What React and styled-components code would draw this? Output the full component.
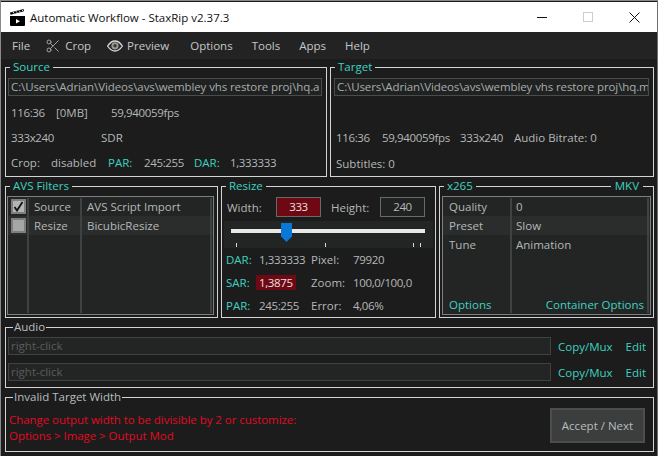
import React from "react";
import styled, { createGlobalStyle } from "styled-components";
import { Scissors } from "lucide-react";

const teal = "#3fd2c0";
const text = "#b4b8b8";

const GlobalStyle = createGlobalStyle`
  html, body {
    margin: 0;
    padding: 0;
    background: #1c1c1c;
  }
  * {
    box-sizing: border-box;
  }
`;

const Window = styled.div`
  width: 658px;
  height: 456px;
  display: flex;
  flex-direction: column;
  background: #1c1c1c;
  border-top: 1px solid #8a8a8a;
  border-left: 1px solid #8a8a8a;
  border-right: 1px solid #6e6e6e;
  overflow: hidden;
  font-family: "Open Sans", "Noto Sans", sans-serif;
  font-size: 11.5px;
  color: ${text};
`;

const TitleBar = styled.div`
  height: 30px;
  flex: none;
  display: flex;
  align-items: center;
  background: #fff;
  color: #111;
  margin-top: 1px;
  padding-left: 9px;
  font-size: 11.5px;
`;

const TitleText = styled.span`
  margin-left: 5px;
  flex: 1;
`;

const CaptionButton = styled.div`
  width: 46px;
  display: flex;
  justify-content: center;
`;

const MenuBar = styled.div`
  height: 27px;
  flex: none;
  display: flex;
  align-items: center;
  background: #232323;
  color: #c4c8c8;
  font-size: 11.5px;
  padding-left: 11px;
`;

const MenuItem = styled.div`
  display: flex;
  align-items: center;
  gap: 4px;
  margin-left: ${(p) => p.$gap || 0}px;
  svg {
    color: #a8a8a8;
  }
`;

const Content = styled.div`
  flex: 1;
  display: flex;
  flex-direction: column;
  gap: 2px;
  padding: 1px 3px 0 4px;
`;

const Row = styled.div`
  display: grid;
  grid-template-columns: ${(p) => p.$cols};
  gap: 3px;
`;

const Group = styled.fieldset`
  position: relative;
  margin: 0;
  padding: 0 2px;
  min-width: 0;
  height: ${(p) => p.$h}px;
  border: 1px solid #d4d4d4;
  display: flex;
  flex-direction: column;
`;

const Legend = styled.legend`
  height: 14px;
  line-height: 14px;
  padding: 0 ${(p) => (p.$plain ? 1 : 3)}px;
  margin-left: ${(p) => (p.$plain ? 5 : 2)}px;
  font-size: 11.5px;
  color: ${(p) => (p.$plain ? "#b8bcbc" : teal)};
`;

const LegendRight = styled.span`
  position: absolute;
  top: -14px;
  right: 10px;
  z-index: 1;
  height: 14px;
  line-height: 14px;
  padding: 0 4px;
  font-size: 11.5px;
  color: ${teal};
  background: #1c1c1c;
`;

const PathBox = styled.div`
  height: 18px;
  flex: none;
  margin: 4px 2px 0 ${(p) => p.$inset || 0}px;
  padding: 0 2px;
  line-height: 16px;
  border: 1px solid #4a4c4c;
  background: #202222;
  white-space: nowrap;
  overflow: hidden;
  letter-spacing: -0.1px;
  color: #a8acac;
`;

const InfoRow = styled.div`
  display: flex;
  flex: none;
  align-items: center;
  height: ${(p) => p.$h || 25}px;
  padding-left: ${(p) => p.$pad ?? 3}px;
  padding-top: ${(p) => p.$top || 0}px;
  white-space: nowrap;
`;

const Cell = styled.span`
  flex: none;
  width: ${(p) => (p.$w ? `${p.$w}px` : "auto")};
  color: ${(p) => (p.$accent ? teal : "inherit")};
  letter-spacing: ${(p) => (p.$num ? "-0.35px" : "normal")};
`;

const ListPanel = styled.div`
  position: relative;
  flex: 1;
  margin: 3px ${(p) => p.$r || 0}px 2px ${(p) => p.$l || 0}px;
  border: 1px solid #7c8082;
  background: #232525;
  display: flex;
  flex-direction: column;
  overflow: hidden;
`;

const ListRow = styled.div`
  height: 19px;
  flex: none;
  display: flex;
  align-items: center;
  background: ${(p) => (p.$alt ? "#2b2d2d" : "transparent")};
`;

const Check = styled.div`
  width: 15px;
  height: 15px;
  margin-left: 3px;
  flex: none;
  background: ${(p) => (p.$on ? "#b4b4b4" : "#a6a6a6")};
  border: 2px solid #7e7e7e;
  display: flex;
  align-items: center;
  justify-content: center;
  color: #111;
`;

const NameCol = styled.span`
  flex: none;
  width: ${(p) => p.$w}px;
  padding-left: ${(p) => p.$pad}px;
`;

const Splitter = styled.div`
  position: absolute;
  top: 1px;
  bottom: 1px;
  left: ${(p) => p.$x}px;
  width: 2px;
  background: #3e4242;
`;

const ListFooter = styled.div`
  margin-top: auto;
  height: 20px;
  display: flex;
  align-items: center;
  justify-content: space-between;
  padding: 0 6px;
  color: ${teal};
`;

const SizeRow = styled.div`
  display: flex;
  flex: none;
  align-items: center;
  height: 20px;
  margin-top: 4px;
  padding-left: 3px;
`;

const SizeLabel = styled.span`
  flex: none;
  width: ${(p) => p.$w}px;
`;

const SizeInput = styled.div`
  width: 45px;
  height: 20px;
  flex: none;
  border: 1px solid #666a6a;
  background: ${(p) => (p.$bad ? "#6e0812" : "#202222")};
  color: ${(p) => (p.$bad ? "#e8e0e0" : text)};
  text-align: center;
  line-height: 17px;
  letter-spacing: -0.35px;
`;

const SliderBand = styled.div`
  position: relative;
  height: 27px;
  flex: none;
  margin-top: 4px;
  background: #232525;
`;

const SliderTrack = styled.div`
  position: absolute;
  left: 7px;
  right: 8px;
  top: 8px;
  height: 4px;
  background: #e8e8e6;
`;

const SliderThumb = styled.div`
  position: absolute;
  left: 57px;
  top: 2px;
  width: 11px;
  height: 19px;
  background: #0a78d6;
  clip-path: polygon(0 0, 100% 0, 100% 70%, 50% 100%, 0 70%);
`;

const Tick = styled.div`
  position: absolute;
  top: 22px;
  left: ${(p) => p.$x}px;
  width: 1px;
  height: 4px;
  background: #d8d8d8;
`;

const ResizeInfo = styled.div`
  display: flex;
  flex-direction: column;
`;

const BadValue = styled.span`
  display: inline-block;
  width: 40px;
  height: 15px;
  line-height: 15px;
  margin-left: -3px;
  padding-left: 3px;
  background: #6e0812;
  color: #e8e0e0;
`;

const AudioRow = styled.div`
  display: flex;
  flex: none;
  align-items: center;
  height: 18px;
  margin-bottom: 8px;
  &:first-of-type {
    margin-top: 3px;
  }
`;

const AudioInput = styled.div`
  width: 543px;
  height: 18px;
  flex: none;
  padding: 0 2px;
  line-height: 16px;
  border: 1px solid #404242;
  background: #232525;
  color: #5a5c5c;
`;

const LinkText = styled.span`
  flex: none;
  color: ${teal};
  margin-left: ${(p) => p.$gap}px;
`;

const AlertBody = styled.div`
  flex: 1;
  display: flex;
  align-items: center;
  justify-content: space-between;
  padding: 0 6px 5px 1px;
`;

const AlertText = styled.div`
  color: #e00a24;
  line-height: 16px;
  margin-top: 8px;
  letter-spacing: -0.05px;
`;

const AcceptButton = styled.button`
  width: 95px;
  height: 35px;
  margin-top: 3px;
  border: 2px solid #4c4e4e;
  background: #3c3e3e;
  color: #b8bcbc;
  font: inherit;
  padding: 0;
`;

const ClapperIcon = () => (
  <svg width="15" height="17" viewBox="0 0 15 17">
    <path d="M0 7h15v9a1 1 0 0 1-1 1H1a1 1 0 0 1-1-1z" fill="#000" />
    <path d="M0 3.5 13.5 0l.6 2.2L.6 5.7z" fill="#000" />
    <path d="M3 3l1.2 1.6M6 2.2l1.2 1.6M9 1.4l1.2 1.6M12 .7l1.2 1.6" stroke="#fff" strokeWidth="0.9" />
    <path d="M6 10l4 2.2L6 14.4z" fill="#fff" />
  </svg>
);

const EyeIcon = () => (
  <svg width="16" height="12" viewBox="0 0 16 12">
    <path d="M.6 6C3 2.400 5.300 1 8 1s5 1.400 7.400 5C13 9.600 10.700 11 8 11S3 9.600.6 6z" fill="#2a2a2a" stroke="#d8d8d8" strokeWidth="1.300" />
    <circle cx="8" cy="5.800" r="3.600" fill="#9a9a9a" />
    <circle cx="8" cy="5.800" r="1.700" fill="#3a3a3a" />
  </svg>
);

const CheckMark = () => (
  <svg width="11" height="11" viewBox="0 0 11 11">
    <path d="M1.500 6 4 9.500 9.500 1" fill="none" stroke="currentColor" strokeWidth="1.800" />
  </svg>
);

export default function App() {
  return (
    <>
      <GlobalStyle />
      <Window>
        <TitleBar>
          <ClapperIcon />
          <TitleText>Automatic Workflow - StaxRip v2.37.3</TitleText>
          <CaptionButton>
            <svg width="10" height="10" viewBox="0 0 10 10">
              <path d="M0 5.500h10" stroke="#111" />
            </svg>
          </CaptionButton>
          <CaptionButton>
            <svg width="10" height="10" viewBox="0 0 10 10">
              <rect x="0.500" y="0.500" width="9" height="9" fill="none" stroke="#ccc" />
            </svg>
          </CaptionButton>
          <CaptionButton>
            <svg width="11" height="11" viewBox="0 0 11 11">
              <path d="M.5.500l10 10M10.500.500l-10 10" stroke="#111" />
            </svg>
          </CaptionButton>
        </TitleBar>
        <MenuBar>
          <MenuItem>File</MenuItem>
          <MenuItem $gap={15}>
            <Scissors size={16} strokeWidth={1.4} />
            Crop
          </MenuItem>
          <MenuItem $gap={16}>
            <EyeIcon />
            Preview
          </MenuItem>
          <MenuItem $gap={21}>Options</MenuItem>
          <MenuItem $gap={19}>Tools</MenuItem>
          <MenuItem $gap={19}>Apps</MenuItem>
          <MenuItem $gap={19}>Help</MenuItem>
        </MenuBar>
        <Content>
          <Row $cols="322px 324px">
            <Group $h={117}>
              <Legend>Source</Legend>
              <PathBox>C:\Users\Adrian\Videos\avs\wembley vhs restore proj\hq.a</PathBox>
              <InfoRow $h={31} $top={2}>
                <Cell $w={45} $num>116:36</Cell>
                <Cell $w={55}>[0MB]</Cell>
                <Cell $num>59,940059fps</Cell>
              </InfoRow>
              <InfoRow $h={20}>
                <Cell $w={90} $num>333x240</Cell>
                <Cell>SDR</Cell>
              </InfoRow>
              <InfoRow $h={30}>
                <Cell $w={40}>Crop:</Cell>
                <Cell $w={57}>disabled</Cell>
                <Cell $w={36} $accent>PAR:</Cell>
                <Cell $w={50} $num>245:255</Cell>
                <Cell $w={36} $accent>DAR:</Cell>
                <Cell $num>1,333333</Cell>
              </InfoRow>
            </Group>
            <Group $h={117}>
              <Legend>Target</Legend>
              <PathBox $inset={1}>C:\Users\Adrian\Videos\avs\wembley vhs restore proj\hq.m</PathBox>
              <InfoRow $h={31} />
              <InfoRow $h={20}>
                <Cell $w={46} $num>116:36</Cell>
                <Cell $w={78} $num>59,940059fps</Cell>
                <Cell $w={54} $num>333x240</Cell>
                <Cell>Audio Bitrate: 0</Cell>
              </InfoRow>
              <InfoRow $h={30} $top={2}>Subtitles: 0</InfoRow>
            </Group>
          </Row>
          <Row $cols="213px 215px 215px">
            <Group $h={139}>
              <Legend>AVS Filters</Legend>
              <ListPanel $l={-1} $r={1}>
                <Splitter $x={19} />
                <Splitter $x={72} />
                <Splitter $x={202} />
                <ListRow>
                  <Check $on>
                    <CheckMark />
                  </Check>
                  <NameCol $w={61} $pad={8}>Source</NameCol>
                  <NameCol $w={120} $pad={0}>AVS Script Import</NameCol>
                </ListRow>
                <ListRow $alt>
                  <Check />
                  <NameCol $w={61} $pad={8}>Resize</NameCol>
                  <NameCol $w={120} $pad={0}>BicubicResize</NameCol>
                </ListRow>
              </ListPanel>
            </Group>
            <Group $h={139}>
              <Legend>Resize</Legend>
              <SizeRow>
                <SizeLabel $w={49}>Width:</SizeLabel>
                <SizeInput $bad>333</SizeInput>
                <SizeLabel $w={10} />
                <SizeLabel $w={49}>Height:</SizeLabel>
                <SizeInput>240</SizeInput>
              </SizeRow>
              <SliderBand>
                <SliderTrack />
                <SliderThumb />
                <Tick $x={12} />
                <Tick $x={101} />
                <Tick $x={189} />
                <Tick $x={196} />
              </SliderBand>
              <ResizeInfo>
                <InfoRow $h={23} $pad={2}>
                  <Cell $w={33} $accent>DAR:</Cell>
                  <Cell $w={52} $num>1,333333</Cell>
                  <Cell $w={42}>Pixel:</Cell>
                  <Cell $num>79920</Cell>
                </InfoRow>
                <InfoRow $h={23} $pad={2}>
                  <Cell $w={33} $accent>SAR:</Cell>
                  <Cell $w={52} $num><BadValue>1,3875</BadValue></Cell>
                  <Cell $w={42}>Zoom:</Cell>
                  <Cell $num>100,0/100,0</Cell>
                </InfoRow>
                <InfoRow $h={23} $pad={2}>
                  <Cell $w={33} $accent>PAR:</Cell>
                  <Cell $w={52} $num>245:255</Cell>
                  <Cell $w={42}>Error:</Cell>
                  <Cell $num>4,06%</Cell>
                </InfoRow>
              </ResizeInfo>
            </Group>
            <Group $h={139}>
              <Legend>x265</Legend>
              <LegendRight>MKV</LegendRight>
              <ListPanel>
                <Splitter $x={67} />
                <Splitter $x={204} />
                <ListRow>
                  <NameCol $w={73} $pad={6}>Quality</NameCol>
                  <NameCol $w={120} $pad={0}>0</NameCol>
                </ListRow>
                <ListRow $alt>
                  <NameCol $w={73} $pad={6}>Preset</NameCol>
                  <NameCol $w={120} $pad={0}>Slow</NameCol>
                </ListRow>
                <ListRow>
                  <NameCol $w={73} $pad={6}>Tune</NameCol>
                  <NameCol $w={120} $pad={0}>Animation</NameCol>
                </ListRow>
                <ListFooter>
                  <span>Options</span>
                  <span>Container Options</span>
                </ListFooter>
              </ListPanel>
            </Group>
          </Row>
          <Group $h={68}>
            <Legend $plain>Audio</Legend>
            <AudioRow>
              <AudioInput>right-click</AudioInput>
              <LinkText $gap={7}>Copy/Mux</LinkText>
              <LinkText $gap={13}>Edit</LinkText>
            </AudioRow>
            <AudioRow>
              <AudioInput>right-click</AudioInput>
              <LinkText $gap={7}>Copy/Mux</LinkText>
              <LinkText $gap={13}>Edit</LinkText>
            </AudioRow>
          </Group>
          <Group $h={62}>
            <Legend $plain>Invalid Target Width</Legend>
            <AlertBody>
              <AlertText>
                Change output width to be divisible by 2 or customize:
                <br />
                Options &gt; Image &gt; Output Mod
              </AlertText>
              <AcceptButton>Accept / Next</AcceptButton>
            </AlertBody>
          </Group>
        </Content>
      </Window>
    </>
  );
}
